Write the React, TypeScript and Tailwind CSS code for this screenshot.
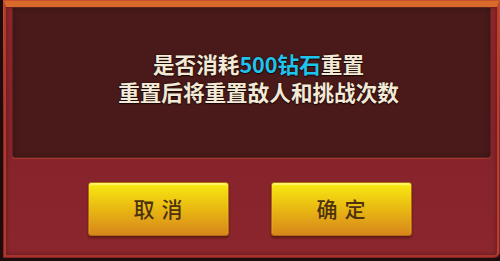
export default function App() {
    return (
        <div className="w-[500px] h-[261px] bg-[#1c0c0a] overflow-hidden font-['Noto_Sans_CJK_SC',sans-serif]">
            <div className="ml-[3px] w-[497px] h-[258px] rounded-br-[6px] bg-gradient-to-b from-[#c8502c] via-[#8e2428] to-[#84222a] p-[1px]">
                <div className="h-full rounded-br-[5px] bg-gradient-to-b from-[#8e2629] via-[#86222a] to-[#8a262c] border-t-[6px] border-t-[#d86a2c] border-l-[2px] border-l-[#b23a2a] border-r-[2px] border-r-[#b8402c] border-b-[2px] border-b-[#a8342c] shadow-[inset_0_0_4px_rgba(0,0,0,0.35)] pl-[6px] pr-[4px]">
                    <div className="w-[479px] h-[151px] bg-[#4a1a1a] rounded-b-[3px] border border-[#5c2220] shadow-[inset_0_0_6px_rgba(0,0,0,0.3),0_1px_0_#a8382e] flex flex-col items-center justify-center pb-[10px] pl-[14px]">
                        <p className="text-[21.6px] leading-[28px] font-semibold text-[#f2e9d6] [text-shadow:0_1px_1px_#1a0604,0_0_2px_#1a0604]">
                            是否消耗<span className="text-[#1fc4ee]">500钻石</span>重置
                        </p>
                        <p className="text-[21.6px] leading-[28px] font-semibold text-[#f2e9d6] [text-shadow:0_1px_1px_#1a0604,0_0_2px_#1a0604]">
                            重置后将重置敌人和挑战次数
                        </p>
                    </div>
                    <div className="flex justify-center gap-[42px] mt-[24px] pr-[6px]">
                        <button className="w-[141px] h-[54px] rounded-[3px] border border-[#b06a10] bg-gradient-to-b from-[#f8ea10] via-[#e8b812] to-[#d8861a] shadow-[inset_0_2px_1px_#fff46a,0_2px_2px_rgba(60,10,0,0.5)] text-[21px] font-medium text-[#4e3210] tracking-[7px] pl-[7px]">
                            取消
                        </button>
                        <button className="w-[141px] h-[54px] rounded-[3px] border border-[#b06a10] bg-gradient-to-b from-[#f8ea10] via-[#e8b812] to-[#d8861a] shadow-[inset_0_2px_1px_#fff46a,0_2px_2px_rgba(60,10,0,0.5)] text-[21px] font-medium text-[#4e3210] tracking-[7px] pl-[7px]">
                            确定
                        </button>
                    </div>
                </div>
            </div>
        </div>
    );
}
